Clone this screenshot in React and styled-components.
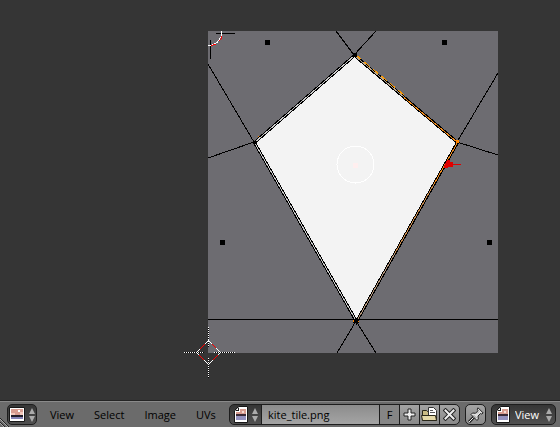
import React from "react";
import styled, { createGlobalStyle, css } from "styled-components";

const GlobalStyle = createGlobalStyle`
  *, *::before, *::after { box-sizing: border-box; }
  body { margin: 0; background: #353535; }
  button, input, select { font: inherit; color: inherit; margin: 0; }
`;

const Editor = styled.div`
  display: flex;
  flex-direction: column;
  height: 100vh;
  font: 11px/19px "Open Sans", "Noto Sans", sans-serif;
  color: #000;
`;

const Viewport = styled.main`
  flex: 1;
  min-height: 0;
  background: #353535;
`;

const Drawing = styled.svg`
  display: block;
  width: 100%;
  height: 100%;
`;

const Header = styled.header`
  position: relative;
  display: flex;
  align-items: center;
  flex: none;
  gap: 5px;
  padding: 2px 4px 2px 7px;
  border-top: 1px solid #8a8a8a;
  background: #6b6b6b;
  box-shadow: 0 -1px #242424;
`;

const Grip = styled.svg`
  position: absolute;
  left: 0;
  bottom: 0;
`;

const dark = css`
  background: linear-gradient(#353535, #505050);
  color: #fff;
`;

const light = css`
  background: linear-gradient(#a3a3a3, #8a8a8a);
`;

const Button = styled.button`
  display: flex;
  align-items: center;
  justify-content: center;
  flex: none;
  gap: 4px;
  width: ${(p) => p.$width || 21}px;
  height: 21px;
  padding: 0;
  border: 1px solid #1d1d1d;
  border-radius: ${(p) => (p.$joined ? 0 : 5)}px;
  ${(p) => (p.$dark ? dark : light)}
  ${(p) => p.$flat && css`background: #858585;`}
`;

const Menus = styled.nav`
  display: flex;
  flex: none;
  gap: 20px;
  width: 182px;
  padding-left: 8px;
`;

const MenuButton = styled.button`
  padding: 0;
  border: 0;
  background: none;
  line-height: 21px;
  white-space: nowrap;
`;

const ImageGroup = styled.div`
  display: flex;
  flex: 1;
  min-width: 0;
  border-radius: 5px;
  > * + * { margin-left: -1px; }
  > :first-child { border-radius: 5px 0 0 5px; }
  > :last-child { border-radius: 0 5px 5px 0; }
`;

const NameInput = styled.input`
  flex: 1;
  min-width: 0;
  height: 21px;
  padding: 0 6px;
  border: 1px solid #1d1d1d;
  border-radius: 0;
  background: linear-gradient(#8c8c8c, #a4a4a4);
`;

const ModeField = styled.label`
  display: flex;
  align-items: center;
  flex: none;
  width: 65px;
  height: 21px;
  padding: 0 3px 0 4px;
  border: 1px solid #1d1d1d;
  border-radius: 5px;
  ${dark}
`;

const ModeSelect = styled.select`
  flex: 1;
  min-width: 0;
  padding: 0 0 0 5px;
  border: 0;
  background: none;
  appearance: none;
`;

const Arrows = () => (
  <svg width="6" height="14" viewBox="0 0 6 14" fill="#aaa" aria-hidden="true">
    <path d="M3 0 6 6H0ZM0 8H6L3 14Z" />
  </svg>
);

const EditorIcon = () => (
  <svg width="16" height="15" viewBox="0 0 16 15" aria-hidden="true">
    <path fill="#fff" stroke="#171717" d="M.5.5h15v14H.5z" />
    <path fill="#d89c90" d="M2 2h12v6H2z" />
    <path fill="#f3c9bd" d="M2 6h4v2H2zM11 5h3v3h-3z" />
    <path fill="#fff" d="M9 3h2v2H9z" />
    <path fill="#211d29" d="M2 8h12v2H2z" />
    <path fill="#8583b6" d="M2 10h12v2H2z" />
  </svg>
);

const ImageIcon = () => (
  <svg width="14" height="17" viewBox="0 0 14 17" aria-hidden="true">
    <path fill="#fff" stroke="#171717" d="M4.500.5h9v16h-13v-12z" />
    <path fill="#171717" d="M5 1v4H1z" />
    <path fill="#fff" d="M4 2v2H2z" />
    <path fill="#d89c90" d="M6 3h6v5H6zM2 6h4v2H2z" />
    <path fill="#f6dbd2" d="M8 5h2v2H8z" />
    <path fill="#3b2a37" d="M2 8h10v2H2z" />
    <path fill="#9492bf" d="M2 10h10v4H2z" />
  </svg>
);

const PlusIcon = () => (
  <svg width="13" height="13" viewBox="0 0 13 13" aria-hidden="true">
    <path fill="#eee" stroke="#222" d="M5 1h3v4h4v3H8v4H5V8H1V5h4z" />
  </svg>
);

const FolderIcon = () => (
  <svg width="17" height="15" viewBox="0 0 17 15" aria-hidden="true">
    <path fill="#c9bb84" stroke="#292719" d="M1.500 3.500h4l1 1h9v9h-14z" />
    <path fill="#fff" stroke="#333" d="M7.500.5h5l3 3v6h-8z" />
    <path stroke="#555" d="M9 3.500h3M9 5.500h5" />
    <path fill="#e4d9a8" stroke="#292719" d="M.5 8.500h14l1 5h-14z" />
  </svg>
);

const CloseIcon = () => (
  <svg width="13" height="13" viewBox="0 0 13 13" aria-hidden="true">
    <path d="M2.500 2.500l8 8m0-8l-8 8" stroke="#222" strokeWidth="4" strokeLinecap="square" />
    <path d="M2.500 2.500l8 8m0-8l-8 8" stroke="#eee" strokeWidth="2" strokeLinecap="square" />
  </svg>
);

const PinIcon = () => (
  <svg width="16" height="16" viewBox="0 0 16 16" aria-hidden="true">
    <path d="M6 10 1 15" stroke="#222" strokeWidth="3" />
    <path d="M6 10 1 15" stroke="#eee" />
    <path fill="#ddd" stroke="#222" d="M10 .8 15.200 6l-1.700 1-1-.5-2.500 2.500.3 3-1.300 1.500L3 7.500 4.500 6l3 .3L10 3.700l-.7-1.500Z" />
    <path d="m5.500 8 3 3M9 6.500l2-2" stroke="#999" />
  </svg>
);

const dots = [[265, 40], [442, 40], [220, 240], [487, 240]];

function UvCanvas() {
  return (
    <Drawing viewBox="0 0 560 401" role="img" aria-label="UV layout of kite_tile.png" shapeRendering="crispEdges" fill="none">
      <path fill="#6d6c71" d="M208 31h290v322H208z" />
      <g stroke="#000">
        <path d="M208 319.500h290M208 64l46 78-46 16M336 31l18 24 22-24M498 73l-41 69 41 13M337 353l19-32 20 32" />
        <path d="M216 33.500h19M210.500 40v19" />
      </g>
      <path fill="#f3f3f3" d="M354 56 457 142 356 321 254 142z" />
      <path stroke="#000" strokeWidth="3" d="M354.500 55.500 254.500 142.500 356.500 321.500 457.500 142.500z" />
      <path stroke="#c8c8c8" d="M354.500 55.500 254.500 142.500 356.500 321.500" />
      <path stroke="#b7a58d" d="M354.500 55.500 404 97" />
      <path stroke="#ff9a00" strokeDasharray="7 4" d="M356 55 404 95" />
      <path stroke="#f08a1c" d="M404 97.500 457.500 142.500 434 184" />
      <path stroke="#c98a4c" d="M434 184 395 253" />
      <path stroke="#b4957a" d="M395 253 356.500 321.500" />
      <path fill="#000" d="M353 53h4v4h-4zM253 141h3v3h-3zM353 319h6v4h-6z" />
      <path fill="#ff8500" d="M456 140h3v3h-3zM258 136h1v1h-1zM353 320h1v2h-1zM358 321h1v1h-1z" />
      {dots.map(([x, y]) => <rect key={`${x}-${y}`} x={x} y={y} width="5" height="5" fill="#000" />)}
      <circle cx="355.500" cy="164.500" r="18.500" stroke="#fff" />
      <path fill="#ffefef" d="M353 163h5v5h-5z" />
      <path fill="#e00000" d="M447 160h3v2h3v2h8v1h-8v2h-5v1h-4v-2z" />
      <path stroke="#fff" d="M221.500 31v5l-4 6-5 3H208" />
      <path stroke="#f00" d="M221.500 36v2l-2 3M216 44l-5 1.500" />
      <path stroke="#000" d="M184 352.500h20M214 352.500h21M208.500 327v20M208.500 358v20" />
      <path stroke="#fff" strokeDasharray="1 1" d="M184 352.500h20M214 352.500h21M208.500 327v20M208.500 358v20" />
      <path stroke="#fff" d="M208.500 340.500l12 12-12 12-12-12z" />
      <path stroke="#f00" d="M199.500 349.500l5-5M212.500 344.500l4 4M217.500 355.500l-5 5M204.500 360.500l-5-5" />
    </Drawing>
  );
}

export default function App() {
  return (
    <Editor>
      <GlobalStyle />
      <Viewport><UvCanvas /></Viewport>
      <Header>
        <Grip width="10" height="10" aria-hidden="true">
          <path d="M0 1 9 10M0 5l5 5" stroke="#222" />
          <path d="M0 2 8 10M0 6l4 4" stroke="#aaa" />
        </Grip>
        <Button $dark $width={30} aria-label="Editor type"><EditorIcon /><Arrows /></Button>
        <Menus aria-label="Editor menus">
          {["View", "Select", "Image", "UVs"].map((name) => <MenuButton key={name}>{name}</MenuButton>)}
        </Menus>
        <ImageGroup>
          <Button $dark $joined $width={33} aria-label="Browse images"><ImageIcon /><Arrows /></Button>
          <NameInput aria-label="Image name" defaultValue="kite_tile.png" />
          <Button $joined $flat aria-label="Fake user">F</Button>
          <Button $joined aria-label="New image"><PlusIcon /></Button>
          <Button $joined aria-label="Open image"><FolderIcon /></Button>
          <Button $joined aria-label="Unlink image"><CloseIcon /></Button>
        </ImageGroup>
        <Button aria-label="Pin image"><PinIcon /></Button>
        <ModeField>
          <ImageIcon />
          <ModeSelect aria-label="Editing mode" defaultValue="View">
            <option>View</option>
            <option>Paint</option>
            <option>Mask</option>
          </ModeSelect>
          <Arrows />
        </ModeField>
      </Header>
    </Editor>
  );
}
